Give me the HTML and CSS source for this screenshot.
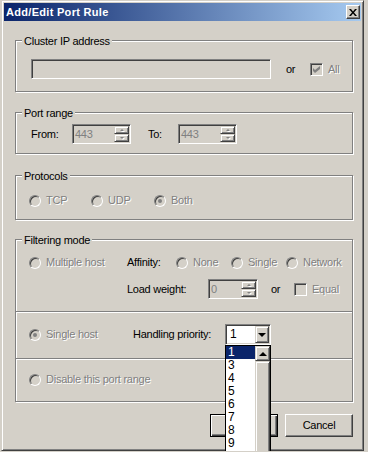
FILE: index.html
```html
<!DOCTYPE html>
<html lang="en">
<head>
    <meta charset="UTF-8">
    <title>Add/Edit Port Rule</title>
    <link rel="stylesheet" href="styles.css">
</head>
<body>
<div class="window">
    <div class="titlebar">
        <span class="title">Add/Edit Port Rule</span>
        <span class="close">
            <svg width="8" height="7" viewBox="0 0 8 7"><path d="M0 0h2l2 2.4L6 0h2L5 3.5 8 7H6L4 4.6 2 7H0l3-3.5z" fill="#000"/></svg>
        </span>
    </div>
    <div class="client">
        <div class="group g-cluster">
            <div class="legend">Cluster IP address</div>
            <div class="row r-cluster">
                <div class="edit ip"></div>
                <span class="or-ip">or</span>
                <span class="check"><svg width="7" height="7" viewBox="0 0 7 7"><path d="M0 2l2 2 5-4v3L2 7 0 5z" fill="#808080"/></svg></span>
                <span class="dis lbl-check">All</span>
            </div>
        </div>

        <div class="group g-port">
            <div class="legend">Port range</div>
            <div class="row r-port">
                <span class="lbl-from">From:</span>
                <div class="edit spin w-port">
                    <span class="val">443</span>
                    <span class="btns"><span class="sb up"></span><span class="sb down"></span></span>
                </div>
                <span class="lbl-to">To:</span>
                <div class="edit spin w-port">
                    <span class="val">443</span>
                    <span class="btns"><span class="sb up"></span><span class="sb down"></span></span>
                </div>
            </div>
        </div>

        <div class="group g-proto">
            <div class="legend">Protocols</div>
            <div class="row r-proto">
                <span class="opt c-tcp"><span class="radio"></span><span class="dis">TCP</span></span>
                <span class="opt c-udp"><span class="radio"></span><span class="dis">UDP</span></span>
                <span class="opt"><span class="radio on"></span><span class="dis">Both</span></span>
            </div>
        </div>

        <div class="group g-filter">
            <div class="sect s-multi">
                <div class="legend">Filtering mode</div>
                <div class="row r-aff">
                    <span class="opt c-multi"><span class="radio"></span><span class="dis">Multiple host</span></span>
                    <span class="c-aff">Affinity:</span>
                    <span class="opt c-none"><span class="radio"></span><span class="dis">None</span></span>
                    <span class="opt c-single"><span class="radio"></span><span class="dis">Single</span></span>
                    <span class="opt"><span class="radio"></span><span class="dis">Network</span></span>
                </div>
                <div class="row r-load">
                    <span class="c-load">Load weight:</span>
                    <div class="edit spin w-load">
                        <span class="val">0</span>
                        <span class="btns"><span class="sb up"></span><span class="sb down"></span></span>
                    </div>
                    <span class="or-load">or</span>
                    <span class="check"></span>
                    <span class="dis lbl-check">Equal</span>
                </div>
            </div>
            <div class="sect s-single">
                <div class="row r-single">
                    <span class="opt c-host"><span class="radio on"></span><span class="dis">Single host</span></span>
                    <span class="c-prio">Handling priority:</span>
                    <div class="combo">
                        <span class="val">1</span>
                        <span class="drop"></span>
                        <div class="list">
                            <div class="items">
                                <div class="sel">1</div>
                                <div>3</div>
                                <div>4</div>
                                <div>5</div>
                                <div>6</div>
                                <div>7</div>
                                <div>8</div>
                                <div>9</div>
                            </div>
                            <div class="vscroll">
                                <span class="sc-up"></span>
                                <span class="thumb"></span>
                            </div>
                        </div>
                    </div>
                </div>
            </div>
            <div class="sect s-disable">
                <div class="row r-disable">
                    <span class="opt"><span class="radio"></span><span class="dis">Disable this port range</span></span>
                </div>
            </div>
        </div>

        <div class="buttons">
            <div class="btn default">OK</div>
            <div class="btn">Cancel</div>
        </div>
    </div>
</div>
</body>
</html>
```

FILE: styles.css
```css
html {
    overflow: hidden;
}
body {
    margin: 0;
    background-color: #d4d0c8;
    font-family: "Liberation Sans", Arial, sans-serif;
    font-size: 11px;
    line-height: 13px;
    letter-spacing: -0.25px;
    color: #000;
}
.window {
    box-sizing: border-box;
    width: 363px;
    height: 451px;
    margin-left: 1px;
    padding: 2px;
    background-color: #d4d0c8;
    border: 1px solid;
    border-color: #d4d0c8 #404040 #404040 #d4d0c8;
    box-shadow: inset 1px 1px 0 #fff, inset -1px -1px 0 #808080;
}
.titlebar {
    height: 18px;
    display: flex;
    align-items: center;
    justify-content: space-between;
    background: linear-gradient(to right, #0a246a, #a6caf0);
}
.title {
    color: #fff;
    font-weight: bold;
    padding-left: 2px;
    letter-spacing: 0.3px;
}
.close {
    box-sizing: border-box;
    width: 14px;
    height: 14px;
    margin-right: 1px;
    display: flex;
    align-items: center;
    justify-content: center;
    background-color: #d4d0c8;
    border: 1px solid;
    border-color: #fff #404040 #404040 #fff;
    box-shadow: inset -1px -1px 0 #808080;
}
.client {
    padding-left: 11px;
}

/* group boxes */
.group {
    box-sizing: border-box;
    width: 338px;
    border: 1px solid #808080;
    box-shadow: inset 1px 1px 0 #fff, 1px 1px 0 #fff;
}
.legend {
    display: table;
    margin: -6px 0 0 6px;
    padding: 0 2px;
    background-color: #d4d0c8;
}
.g-cluster { margin-top: 19px; height: 52px; }
.g-port { margin-top: 20px; height: 42px; }
.g-proto { margin-top: 21px; height: 45px; }
.g-filter { margin-top: 19px; height: 163px; }

.sect {
    display: flow-root;
    box-sizing: border-box;
}
.s-multi { height: 71px; }
.s-single, .s-disable {
    border-top: 1px solid #808080;
    box-shadow: inset 0 1px 0 #fff;
}
.s-single { height: 47px; }
.s-disable { height: 43px; }

/* rows */
.row {
    display: flex;
    align-items: center;
    padding-left: 13px;
}
.r-cluster { margin-top: 11px; height: 20px; padding-left: 15px; }
.r-port { margin-top: 4px; height: 20px; padding-left: 15px; }
.r-proto { margin-top: 11px; height: 13px; }
.r-aff { margin-top: 9px; height: 13px; }
.r-load { margin-top: 10px; height: 20px; padding-left: 111px; }
.r-single { margin-top: 12px; height: 21px; }
.r-disable { margin-top: 14px; height: 13px; }

.dis {
    color: #808080;
    text-shadow: 1px 1px 0 #fff;
}
.opt {
    display: flex;
    align-items: center;
    gap: 5px;
}
.c-tcp { width: 62px; }
.c-udp { width: 63px; }
.c-multi { width: 98px; }
.c-aff { width: 49px; }
.c-none, .c-single { width: 55px; }
.c-load { width: 81px; }
.c-host { width: 104px; }
.c-prio { width: 92px; }
.or-ip { margin-left: 15px; width: 24px; }
.or-load { margin-left: 13px; width: 23px; }
.lbl-check { margin-left: 5px; }
.lbl-from { width: 41px; }
.lbl-to { margin-left: 17px; width: 30px; }

/* sunken controls */
.edit {
    box-sizing: border-box;
    height: 20px;
    border: 1px solid;
    border-color: #808080 #fff #fff #808080;
    box-shadow: inset 1px 1px 0 #404040, inset -1px -1px 0 #d4d0c8;
    background-color: #d4d0c8;
}
.ip { width: 240px; }
.spin {
    display: flex;
    justify-content: space-between;
    padding: 1px;
}
.w-port { width: 59px; }
.w-load { width: 50px; }
.spin .val {
    color: #808080;
    line-height: 16px;
    padding-left: 1px;
}
.btns {
    display: flex;
    flex-direction: column;
    width: 15px;
}
.sb, .drop, .sc-up, .thumb, .btn {
    box-sizing: border-box;
    background-color: #d4d0c8;
    border: 1px solid;
    border-color: #d4d0c8 #404040 #404040 #d4d0c8;
    box-shadow: inset 1px 1px 0 #fff, inset -1px -1px 0 #808080;
}
.sb {
    height: 8px;
    display: flex;
    align-items: center;
    justify-content: center;
}
.sb::before {
    content: "";
    border-left: 2px solid transparent;
    border-right: 2px solid transparent;
    filter: drop-shadow(1px 1px 0 #fff);
}
.sb.up::before { border-bottom: 2px solid #808080; }
.sb.down::before { border-top: 2px solid #808080; }

.check {
    box-sizing: border-box;
    width: 13px;
    height: 13px;
    display: flex;
    align-items: center;
    justify-content: center;
    border: 1px solid;
    border-color: #808080 #fff #fff #808080;
    box-shadow: inset 1px 1px 0 #404040, inset -1px -1px 0 #d4d0c8;
    background-color: #d4d0c8;
}
.radio {
    box-sizing: border-box;
    width: 12px;
    height: 12px;
    flex: none;
    border-radius: 50%;
    border: 1px solid;
    border-color: #808080 #fff #fff #808080;
    box-shadow: inset 1px 1px 0 #404040, inset -1px -1px 0 #d4d0c8;
    background-color: #d4d0c8;
    display: flex;
    align-items: center;
    justify-content: center;
}
.radio.on::after {
    content: "";
    width: 4px;
    height: 4px;
    border-radius: 50%;
    background-color: #808080;
}

/* combo and its open list */
.combo {
    position: relative;
    box-sizing: border-box;
    width: 46px;
    height: 21px;
    padding: 1px;
    display: flex;
    justify-content: space-between;
    border: 1px solid;
    border-color: #808080 #fff #fff #808080;
    box-shadow: inset 1px 1px 0 #404040, inset -1px -1px 0 #d4d0c8;
    background-color: #fff;
}
.combo .val {
    font-size: 12px;
    line-height: 17px;
    padding-left: 3px;
}
.drop {
    width: 14px;
    height: 17px;
    display: flex;
    align-items: center;
    justify-content: center;
}
.drop::before, .sc-up::before {
    content: "";
    border-left: 4px solid transparent;
    border-right: 4px solid transparent;
}
.drop::before { border-top: 4px solid #000; }
.sc-up::before { border-bottom: 4px solid #000; }
.list {
    position: absolute;
    left: -1px;
    top: 20px;
    width: 46px;
    height: 110px;
    box-sizing: border-box;
    display: flex;
    border: 1px solid #000;
    background-color: #fff;
}
.items {
    width: 29px;
}
.items div {
    height: 13px;
    font-size: 12px;
    line-height: 13px;
    padding-left: 2px;
}
.items .sel {
    background-color: #0a246a;
    color: #fff;
}
.vscroll {
    width: 15px;
    display: flex;
    flex-direction: column;
}
.sc-up {
    height: 15px;
    display: flex;
    align-items: center;
    justify-content: center;
}
.thumb {
    flex: 1;
}

/* buttons */
.buttons {
    width: 338px;
    margin-top: 12px;
    display: flex;
    justify-content: flex-end;
    gap: 7px;
}
.btn {
    width: 68px;
    height: 23px;
    display: flex;
    align-items: center;
    justify-content: center;
    border-color: #fff #404040 #404040 #fff;
    box-shadow: inset -1px -1px 0 #808080;
}
.btn.default {
    border-color: #000;
    box-shadow: inset 1px 1px 0 #fff, inset -1px -1px 0 #404040, inset -2px -2px 0 #808080;
}
```
